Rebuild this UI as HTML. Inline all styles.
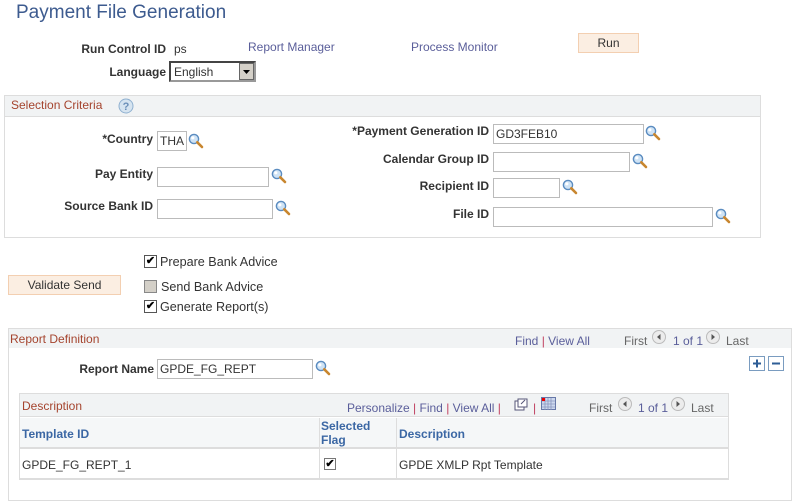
<!DOCTYPE html>
<html><head><style>
*{margin:0;padding:0;box-sizing:border-box}
body{width:794px;height:503px;background:#fff;font-family:"Liberation Sans",Arial,sans-serif;font-size:12px;color:#333;position:relative;overflow:hidden}
.a{position:absolute;white-space:nowrap}
.lbl{font-weight:bold;color:#333;text-align:right}
.lnk{color:#5a5e9a}
.inp{position:absolute;border:1px solid #bbb;background:#fff;height:20px;padding:2px 2px;font-size:12px;color:#333}
.btn{position:absolute;background:#fbeee2;border:1px solid #f3cfb1;text-align:center;color:#333;font-size:12px}
.box{position:absolute;border:1px solid #ddd}
.band{position:absolute;background:#f1f3f4;border-bottom:1px solid #ddd}
.hd{color:#a5442e;font-size:12px}
.cb{position:absolute;width:13px;height:13px;border:1px solid #555;background:#fff;font-size:11px;line-height:10px;text-align:center;font-weight:bold;color:#000}
.gr{color:#666}
.sep{color:#c04060}
</style></head><body>
<svg width="0" height="0" style="position:absolute"><defs>
<g id="mg"><circle cx="6" cy="6" r="4.6" fill="#cfe3f5" stroke="#5b8cc0" stroke-width="1.4"/><circle cx="4.8" cy="4.8" r="1.6" fill="#fff"/><path d="M9.3 9.3 L14 14" stroke="#c8862f" stroke-width="2.6" stroke-linecap="round"/></g>
<g id="arl"><circle cx="7" cy="7" r="6.5" fill="#ececec" stroke="#bbb"/><path d="M8.5 4 L5 7 L8.5 10Z" fill="#555"/></g>
<g id="arr"><circle cx="7" cy="7" r="6.5" fill="#ececec" stroke="#bbb"/><path d="M5.5 4 L9 7 L5.5 10Z" fill="#555"/></g>
</defs></svg>

<div class="a" style="left:16px;top:2px;font-size:19px;color:#3d5b8f">Payment File Generation</div>

<div class="a lbl" style="left:60px;width:106px;top:42px">Run Control ID</div>
<div class="a" style="left:174px;top:42px">ps</div>
<div class="a lnk" style="left:248px;top:40px">Report Manager</div>
<div class="a lnk" style="left:411px;top:40px">Process Monitor</div>
<div class="btn" style="left:578px;top:33px;width:61px;height:20px;line-height:18px">Run</div>

<div class="a lbl" style="left:60px;width:106px;top:65px">Language</div>
<div class="a" style="left:169px;top:61px;width:87px;height:21px;border:2px solid #444;border-right-color:#999;border-bottom-color:#999;background:#fff;padding:2px 3px">English</div>
<div class="a" style="left:239px;top:63px;width:15px;height:17px;background:#d4d0c8;border:1px solid #666"><svg width="13" height="15"><path d="M3 6 L10 6 L6.5 10Z" fill="#000"/></svg></div>

<div class="box" style="left:4px;top:95px;width:757px;height:143px"></div>
<div class="band" style="left:5px;top:96px;width:755px;height:21px"></div>
<div class="a hd" style="left:11px;top:98px">Selection Criteria</div>
<svg class="a" style="left:118px;top:98px" width="16" height="16"><circle cx="8" cy="8" r="7" fill="#d6e4f0" stroke="#8fb0d0"/><text x="8" y="12" font-size="11" font-weight="bold" fill="#6b8fb8" text-anchor="middle" font-family="Liberation Sans">?</text></svg>

<div class="a lbl" style="left:60px;width:93px;top:132px">*Country</div>
<div class="inp" style="left:157px;top:131px;width:30px">THA</div>
<svg class="a" style="left:188px;top:133px" width="16" height="16"><use href="#mg"/></svg>
<div class="a lbl" style="left:60px;width:93px;top:167px">Pay Entity</div>
<div class="inp" style="left:157px;top:167px;width:112px"></div>
<svg class="a" style="left:271px;top:168px" width="16" height="16"><use href="#mg"/></svg>
<div class="a lbl" style="left:40px;width:113px;top:199px">Source Bank ID</div>
<div class="inp" style="left:157px;top:199px;width:116px"></div>
<svg class="a" style="left:275px;top:200px" width="16" height="16"><use href="#mg"/></svg>

<div class="a lbl" style="left:330px;width:159px;top:124px">*Payment Generation ID</div>
<div class="inp" style="left:493px;top:124px;width:151px">GD3FEB10</div>
<svg class="a" style="left:645px;top:125px" width="16" height="16"><use href="#mg"/></svg>
<div class="a lbl" style="left:330px;width:159px;top:152px">Calendar Group ID</div>
<div class="inp" style="left:493px;top:152px;width:137px"></div>
<svg class="a" style="left:632px;top:153px" width="16" height="16"><use href="#mg"/></svg>
<div class="a lbl" style="left:330px;width:159px;top:179px">Recipient ID</div>
<div class="inp" style="left:493px;top:178px;width:67px"></div>
<svg class="a" style="left:562px;top:179px" width="16" height="16"><use href="#mg"/></svg>
<div class="a lbl" style="left:330px;width:159px;top:207px">File ID</div>
<div class="inp" style="left:493px;top:207px;width:220px"></div>
<svg class="a" style="left:715px;top:208px" width="16" height="16"><use href="#mg"/></svg>

<div class="btn" style="left:8px;top:275px;width:113px;height:20px;line-height:18px">Validate Send</div>
<div class="cb" style="left:144px;top:255px">✔</div>
<div class="a" style="left:160px;top:255px;font-size:12.6px">Prepare Bank Advice</div>
<div class="cb" style="left:144px;top:280px;background:#d4d0c8;border-color:#888"></div>
<div class="a" style="left:161px;top:280px;font-size:12.6px">Send Bank Advice</div>
<div class="cb" style="left:144px;top:300px">✔</div>
<div class="a" style="left:160px;top:300px;font-size:12.6px">Generate Report(s)</div>

<div class="box" style="left:8px;top:328px;width:784px;height:173px"></div>
<div class="band" style="left:9px;top:329px;width:782px;height:19px;border-bottom:none"></div>
<div class="a hd" style="left:10px;top:332px">Report Definition</div>
<div class="a lnk" style="left:515px;top:334px">Find <span class="sep">|</span> View All</div>
<div class="a gr" style="left:624px;top:334px">First</div>
<svg class="a" style="left:652px;top:330px" width="14" height="14"><use href="#arl"/></svg>
<div class="a lnk" style="left:673px;top:334px">1 of 1</div>
<svg class="a" style="left:706px;top:330px" width="14" height="14"><use href="#arr"/></svg>
<div class="a gr" style="left:726px;top:334px">Last</div>

<div class="a lbl" style="left:60px;width:94px;top:362px">Report Name</div>
<div class="inp" style="left:157px;top:359px;width:156px">GPDE_FG_REPT</div>
<svg class="a" style="left:315px;top:360px" width="16" height="16"><use href="#mg"/></svg>
<svg class="a" style="left:749px;top:356px" width="36" height="16"><rect x=".5" y=".5" width="15" height="14" fill="#fff" stroke="#7a9cc0"/><path d="M4 7.5h8M8 3.5v8" stroke="#2e5d96" stroke-width="2"/><rect x="19.5" y=".5" width="15" height="14" fill="#fff" stroke="#7a9cc0"/><path d="M23 7.5h8" stroke="#2e5d96" stroke-width="2"/></svg>

<div class="box" style="left:19px;top:393px;width:710px;height:87px;border-color:#ddd;border-bottom:2px solid #ddd"></div>
<div class="band" style="left:20px;top:394px;width:708px;height:23px"></div>
<div class="a hd" style="left:22px;top:399px">Description</div>
<div class="a lnk" style="left:347px;top:401px">Personalize <span class="sep">|</span> Find <span class="sep">|</span> View All <span class="sep">|</span></div>
<svg class="a" style="left:514px;top:398px" width="14" height="13"><rect x="1" y="3" width="9" height="9" fill="#fff" stroke="#557"/><rect x="4" y="1" width="9" height="8" fill="#fff" stroke="#557"/><path d="M7 6l4-4" stroke="#557"/></svg>
<div class="a sep" style="left:533px;top:401px">|</div>
<svg class="a" style="left:541px;top:397px" width="15" height="13"><rect x=".5" y=".5" width="14" height="12" fill="#cdd8ee" stroke="#6778a8"/><path d="M1 4h13M1 7h13M1 10h13M4 1v12M7 1v12M10 1v12" stroke="#8a97bd" stroke-width=".8"/><rect x="1" y="1" width="3" height="3" fill="#e00"/></svg>
<div class="a gr" style="left:589px;top:401px">First</div>
<svg class="a" style="left:618px;top:397px" width="14" height="14"><use href="#arl"/></svg>
<div class="a lnk" style="left:638px;top:401px">1 of 1</div>
<svg class="a" style="left:671px;top:397px" width="14" height="14"><use href="#arr"/></svg>
<div class="a gr" style="left:691px;top:401px">Last</div>

<div class="a" style="left:20px;top:418px;width:708px;height:31px;background:#f5f7f8;border-bottom:2px solid #ddd"></div>
<div class="a" style="left:319px;top:418px;width:1px;height:61px;background:#ddd"></div>
<div class="a" style="left:396px;top:418px;width:1px;height:61px;background:#ddd"></div>
<div class="a" style="left:22px;top:427px;font-weight:bold;color:#3b67a4">Template ID</div>
<div class="a" style="left:321px;top:419px;font-weight:bold;color:#3b67a4;line-height:14px">Selected<br>Flag</div>
<div class="a" style="left:399px;top:427px;font-weight:bold;color:#3b67a4">Description</div>
<div class="a" style="left:22px;top:458px">GPDE_FG_REPT_1</div>
<div class="cb" style="left:324px;top:458px;width:12px;height:12px;border-color:#777">✔</div>
<div class="a" style="left:399px;top:458px">GPDE XMLP Rpt Template</div>
</body></html>
